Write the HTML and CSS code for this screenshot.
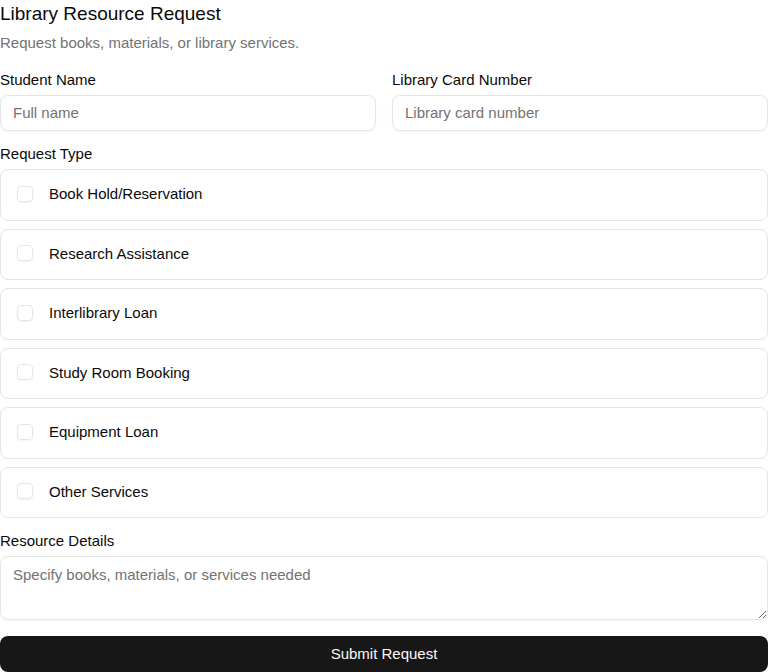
FILE: index.html
```html
<!DOCTYPE html>
<html lang="en">
<head>
<meta charset="utf-8">
<title>Library Resource Request</title>
<link rel="stylesheet" href="styles.css">
</head>
<body>
<form class="form">
  <header class="intro">
    <h1 class="title">Library Resource Request</h1>
    <p class="subtitle">Request books, materials, or library services.</p>
  </header>
  <div class="row">
    <div class="field">
      <label class="label" for="name">Student Name</label>
      <input class="control" id="name" type="text" placeholder="Full name">
    </div>
    <div class="field">
      <label class="label" for="card">Library Card Number</label>
      <input class="control" id="card" type="text" placeholder="Library card number">
    </div>
  </div>
  <fieldset class="group">
    <legend class="label legend">Request Type</legend>
    <div class="options">
      <label class="option"><input class="check" type="checkbox" name="type" value="hold">Book Hold/Reservation</label>
      <label class="option"><input class="check" type="checkbox" name="type" value="research">Research Assistance</label>
      <label class="option"><input class="check" type="checkbox" name="type" value="interlibrary">Interlibrary Loan</label>
      <label class="option"><input class="check" type="checkbox" name="type" value="room">Study Room Booking</label>
      <label class="option"><input class="check" type="checkbox" name="type" value="equipment">Equipment Loan</label>
      <label class="option"><input class="check" type="checkbox" name="type" value="other">Other Services</label>
    </div>
  </fieldset>
  <div class="field">
    <label class="label" for="details">Resource Details</label>
    <textarea class="control details" id="details" placeholder="Specify books, materials, or services needed"></textarea>
  </div>
  <button class="submit" type="submit">Submit Request</button>
</form>
</body>
</html>
```
FILE: styles.css
```css
*, *::before, *::after { box-sizing: border-box; }

body {
  margin: 0;
  background: #fff;
  color: #0a0a0a;
  font-family: "Liberation Sans", Arial, sans-serif;
  font-size: 15px;
  line-height: 20px;
}

.form {
  display: flex;
  flex-direction: column;
  gap: 16px;
}

.intro {
  display: flex;
  flex-direction: column;
  gap: 4px;
  margin-bottom: 3px;
}

.title {
  margin: 0;
  font-size: 19px;
  font-weight: 400;
  line-height: 28px;
}

.subtitle {
  margin: 0;
  color: #737373;
  line-height: 22px;
}

.row {
  display: grid;
  grid-template-columns: 1fr 1fr;
  gap: 16px;
}

.field {
  display: flex;
  flex-direction: column;
  gap: 8px;
  min-width: 0;
}

.label { line-height: 14px; }

.control {
  display: block;
  width: 100%;
  margin: 0;
  padding: 7px 12px;
  border: 1px solid #e5e5e5;
  border-radius: 8px;
  background: transparent;
  color: inherit;
  font: inherit;
  box-shadow: 0 1px 2px rgb(0 0 0 / 5%);
}

.control::placeholder {
  color: #737373;
  opacity: 1;
}

.details {
  min-height: 64px;
  padding: 8px 12px;
  resize: vertical;
}

.group {
  min-width: 0;
  margin: 0;
  padding: 0;
  border: 0;
}

.legend {
  padding: 0;
  margin-bottom: 8px;
}

.options {
  display: grid;
  gap: 8px;
}

.option {
  display: flex;
  align-items: center;
  gap: 16px;
  padding: 14px 16px 16px;
  border: 1px solid #e5e5e5;
  border-radius: 8px;
  line-height: 1.3;
}

.check {
  flex: none;
  appearance: none;
  width: 16px;
  height: 16px;
  margin: 0;
  border: 1px solid #e5e5e5;
  border-radius: 4px;
  box-shadow: 0 1px 2px rgb(0 0 0 / 5%);
}

.check:checked { background: #171717; }

.submit {
  padding: 8px 16px;
  border: 0;
  border-radius: 8px;
  background: #171717;
  color: #fafafa;
  font: inherit;
}
```
